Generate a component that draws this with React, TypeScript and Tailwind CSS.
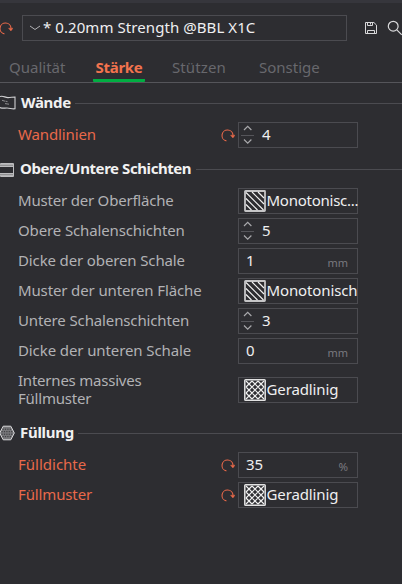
import type { ReactNode } from "react";

function ResetIcon() {
  return (
    <svg width="14" height="14" viewBox="0 0 14 14" fill="none" className="shrink-0">
      <path d="M5.400 12.900A5.500 5.500 0 1 1 12 7.300" stroke="#e9694a" strokeWidth="1.1" />
      <path d="M9.500 7.200h4.500l-2.100 2.800z" fill="#e9694a" stroke="#e9694a" strokeWidth="0.4" />
    </svg>
  );
}

function SaveIcon() {
  return (
    <svg width="14" height="14" viewBox="0 0 14 14" fill="none" stroke="#d8d8da" strokeWidth="1" className="shrink-0">
      <path d="M1.5 1.5h8.400l2.600 2.600v8.400h-11zM3.500 1.500v3h5v-3M6.500 2v1.500M3.500 12.500v-3h7v3" />
    </svg>
  );
}

function SearchIcon() {
  return (
    <svg width="16" height="16" viewBox="0 0 16 16" fill="none" stroke="#d8d8da" strokeWidth="1.2" className="shrink-0">
      <circle cx="6.200" cy="6.200" r="4.900" />
      <path d="M9.800 9.800l5 5" />
    </svg>
  );
}

function LinesIcon() {
  return (
    <svg width="22" height="22" viewBox="0 0 22 22" fill="none" className="block shrink-0">
      <rect x="1" y="1" width="20" height="20" rx="0.5" stroke="#c4c4c6" strokeWidth="1.8" />
      <path d="M2 14.500L7.500 20M2 8.500L13.500 20M2 2.500L19.500 20M8 2l12 12M14 2l6 6" stroke="#f0f0f0" strokeWidth="1.2" />
    </svg>
  );
}

function GridIcon() {
  return (
    <svg width="22" height="22" viewBox="0 0 22 22" fill="none" className="block shrink-0">
      <rect x="0.8" y="0.8" width="20.400" height="20.400" rx="0.8" stroke="#e2e2e2" strokeWidth="1.500" />
      <path
        d="M2 14l6 6M2 8l12 12M2 2l18 18M8 2l12 12M14 2l6 6M2 8l6-6M2 14L14 2M2 20L20 2M8 20L20 8M14 20l6-6"
        stroke="#f0f0f0"
        strokeWidth="1.2"
      />
    </svg>
  );
}

function WallIcon() {
  return (
    <svg width="16" height="16" viewBox="0 0 16 16" fill="none" stroke="#d0d0d2" className="-mt-0.5 shrink-0">
      <path d="M0 1.600C3 .4 5 2.600 8 2.600s4-.6 7-.6v11.800c-3 .6-5-.8-8-.8s-4 .6-7-.4" strokeWidth="1.100" />
      <path d="M2 5.300l3 .9M5 8.600l4 .6M5.500 6.200l2 .4" stroke="#98989b" strokeWidth="0.9" />
    </svg>
  );
}

function ShellIcon() {
  return (
    <svg width="14" height="16" viewBox="0 0 14 16" className="shrink-0">
      <rect y="1" width="14" height="14" rx="1" fill="#bcbcbe" />
      <path d="M0 3.300h13M0 12.700h13" stroke="#77777a" strokeWidth="0.8" />
      <rect y="5" width="13" height="6" fill="#2d2d31" />
    </svg>
  );
}

function InfillIcon() {
  return (
    <svg width="15" height="16" viewBox="0 0 15 16" fill="none" className="-mt-px shrink-0">
      <path d="M3.200 1.200h7.600L14.300 8l-3.500 6.800H3.200L-.3 8z" fill="#77777a" stroke="#d8d8da" />
      <path d="M2.500 4.200h9.500M1.500 6.700h11.500M1.500 9.200h11.500M2.500 11.700h9.500" stroke="#343438" strokeDasharray="1.2 1.2" />
    </svg>
  );
}

function Section({ icon, title, style }: { icon: ReactNode; title: string; style: string }) {
  return (
    <div className="flex h-9 items-center pt-[3px]">
      {icon}
      <h2 className={`mb-[3px] shrink-0 whitespace-nowrap text-[15px] leading-5 font-bold text-[#f1f1f1] ${style}`}>{title}</h2>
      <div className="h-px flex-1 bg-[#4b4b50]" />
    </div>
  );
}

function Row({
  label,
  changed = false,
  tall = false,
  tracking = "tracking-[-0.13px]",
  children,
}: {
  label: ReactNode;
  changed?: boolean;
  tall?: boolean;
  tracking?: string;
  children: ReactNode;
}) {
  return (
    <div className={`flex items-center pl-[18px] ${tall ? "h-12" : "h-[30px]"}`}>
      <span
        className={`mb-0.5 w-[203px] whitespace-nowrap text-[15px] leading-[18px] ${tracking} ${changed ? "text-[#e9694a]" : "text-[#b2b2b5]"}`}
      >
        {label}
      </span>
      <div className="flex w-[17px] items-center">{changed && <ResetIcon />}</div>
      <div className="flex h-[26px] w-[120px] items-center border border-[#4b4b50] text-[15px] leading-5 text-[#efeff0]">
        {children}
      </div>
    </div>
  );
}

function Spin({ value }: { value: string }) {
  return (
    <>
      <svg width="13" height="24" viewBox="0 0 13 24" fill="none" className="ml-0.5 shrink-0">
        <path d="M3 7l3.700-3.600L10.400 7M3 16.500l3.700 3.600 3.700-3.600" stroke="#a9a9ac" strokeWidth="1.200" />
        <path d="M0 12.500h13" stroke="#55555a" />
      </svg>
      <span className="mb-0.5 ml-2">{value}</span>
    </>
  );
}

function Field({ value, unit }: { value: string; unit: string }) {
  return (
    <>
      <span className="mb-0.5 ml-[7px] flex-1">{value}</span>
      <span className={`mr-[9px] pt-1 text-[#7a7a80] ${unit === "mm" ? "text-[11px]" : "text-[11.5px]"}`}>{unit}</span>
    </>
  );
}

function Pattern({ icon, name, tracking = "tracking-normal" }: { icon: ReactNode; name: string; tracking?: string }) {
  return (
    <>
      <span className="ml-[5px]">{icon}</span>
      <span className={`mb-0.5 ml-[0.5px] whitespace-nowrap ${tracking}`}>{name}</span>
    </>
  );
}

export default function App() {
  return (
    <main className="flex h-[584px] w-[402px] flex-col overflow-hidden bg-[#2d2d31] font-['Noto_Sans',sans-serif]">
      <div className="h-[3px] shrink-0 bg-[#36363c]" />
      <header className="flex h-[50px] shrink-0 items-center">
        <div className="-ml-px flex w-[23px] shrink-0">
          <ResetIcon />
        </div>
        <div className="flex h-[26px] w-[325px] shrink-0 items-center border border-[#4b4b50] text-[15px] leading-5 text-[#efeff0]">
          <svg width="12" height="6" viewBox="0 0 12 6" fill="none" stroke="#b2b2b5" className="ml-1.5 shrink-0">
            <path d="M1 1l5 3.500 5-3.500" />
          </svg>
          <span className="mb-0.5 ml-0.5 whitespace-nowrap tracking-[0.07px]">* 0.20mm Strength @BBL X1C</span>
        </div>
        <span className="ml-[17px] shrink-0">
          <SaveIcon />
        </span>
        <span className="ml-[9px] shrink-0">
          <SearchIcon />
        </span>
      </header>
      <nav className="mb-px flex h-[30px] shrink-0 items-stretch border-b border-[#55555a] text-[15px] leading-[28px] text-[#68686d]">
        <span className="ml-[9px] w-[84px]">Qualität</span>
        <span className="flex w-[52px] flex-col items-center rounded-b-[1px] border-b-[3px] border-[#00ae42] font-bold tracking-[-0.3px] text-[#f2734e]">
          Stärke
        </span>
        <span className="ml-[27px] w-[87px] tracking-[0.1px]">Stützen</span>
        <span>Sonstige</span>
      </nav>
      <Section icon={<WallIcon />} title="Wände" style="ml-[5px] w-[54px] tracking-[-0.3px]" />
      <Row label="Wandlinien" changed>
        <Spin value="4" />
      </Row>
      <Section icon={<ShellIcon />} title="Obere/Untere Schichten" style="ml-1.5 w-[176px] tracking-[-0.43px]" />
      <Row label="Muster der Oberfläche" tracking="tracking-[-0.2px]">
        <Pattern icon={<LinesIcon />} name="Monotonisc..." tracking="tracking-[-0.25px]" />
      </Row>
      <Row label="Obere Schalenschichten">
        <Spin value="5" />
      </Row>
      <Row label="Dicke der oberen Schale">
        <Field value="1" unit="mm" />
      </Row>
      <Row label="Muster der unteren Fläche">
        <Pattern icon={<LinesIcon />} name="Monotonisch" tracking="tracking-[-0.12px]" />
      </Row>
      <Row label="Untere Schalenschichten">
        <Spin value="3" />
      </Row>
      <Row label="Dicke der unteren Schale" tracking="tracking-[-0.1px]">
        <Field value="0" unit="mm" />
      </Row>
      <Row tall label={<>Internes massives<br />Füllmuster</>} tracking="tracking-[-0.22px]">
        <Pattern icon={<GridIcon />} name="Geradlinig" tracking="tracking-[-0.12px]" />
      </Row>
      <Section icon={<InfillIcon />} title="Füllung" style="ml-[5px] w-[58px] tracking-[-0.3px]" />
      <Row label="Fülldichte" changed tracking="tracking-normal">
        <Field value="35" unit="%" />
      </Row>
      <Row label="Füllmuster" changed>
        <Pattern icon={<GridIcon />} name="Geradlinig" tracking="tracking-[-0.12px]" />
      </Row>
    </main>
  );
}
